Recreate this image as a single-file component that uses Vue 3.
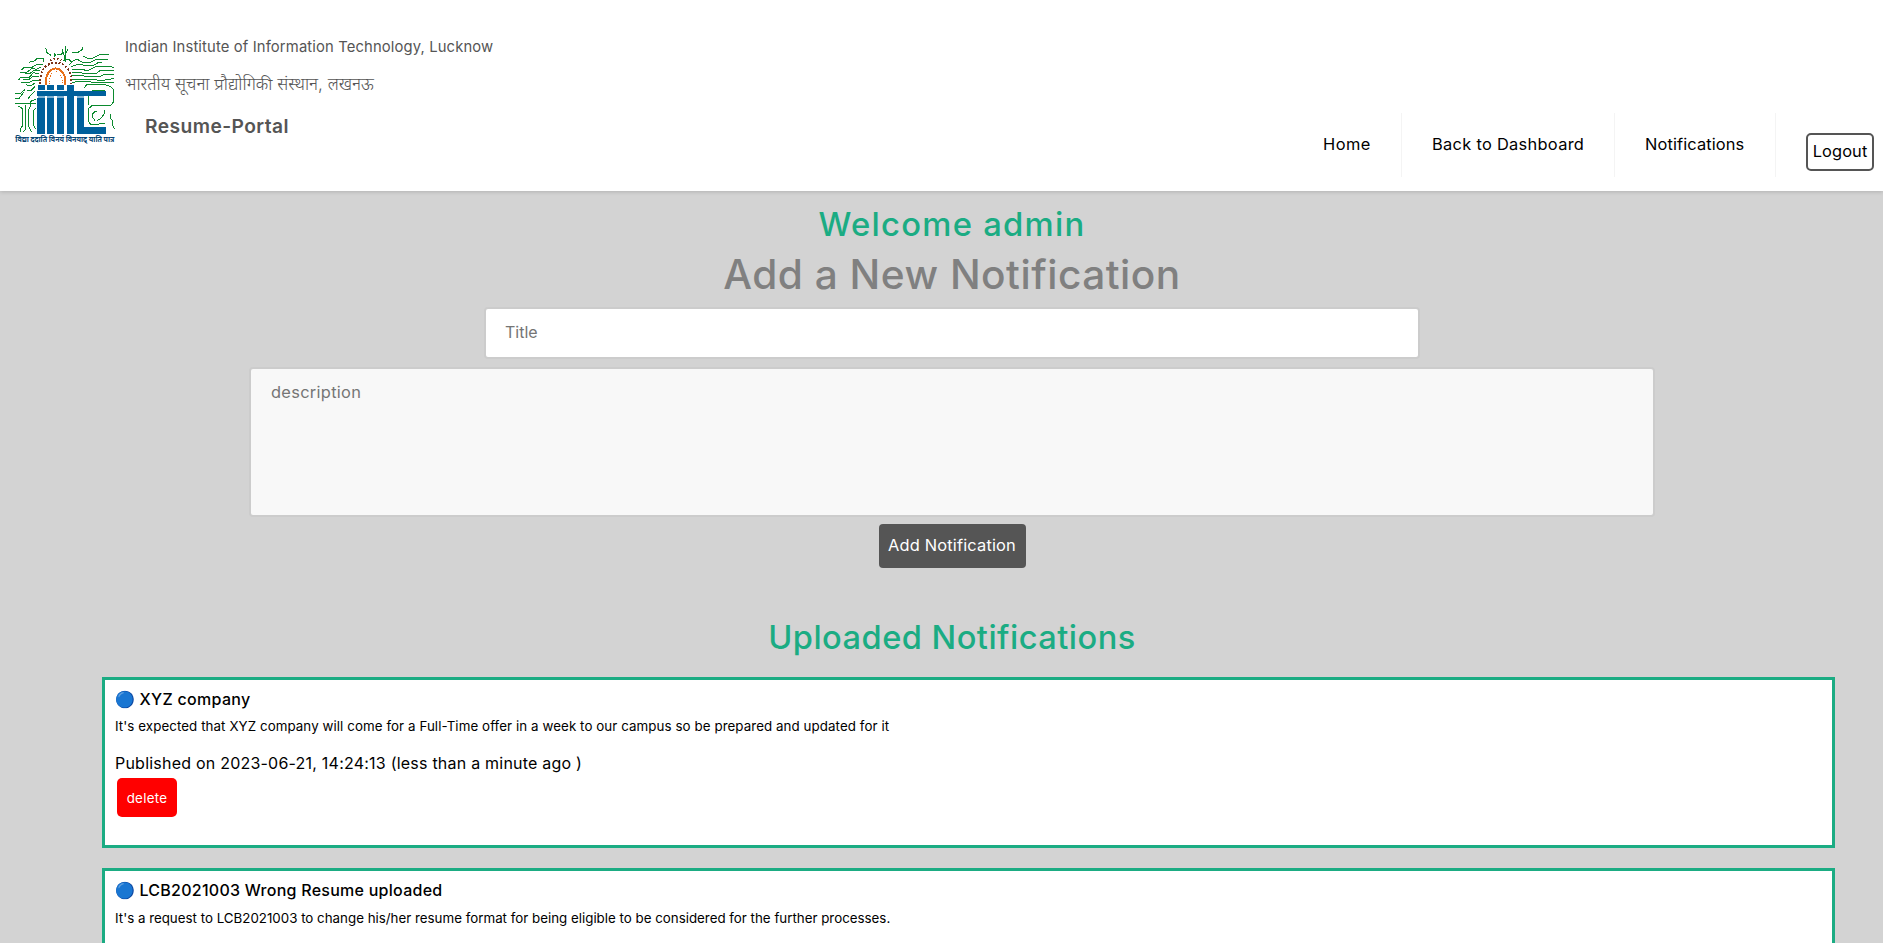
<script setup>
import { ref } from 'vue'

const title = ref('')
const description = ref('')

const links = [
  { label: 'Home', cls: 'home' },
  { label: 'Back to Dashboard', cls: 'back' },
  { label: 'Notifications', cls: 'notes' },
]

const notifications = [
  {
    title: 'XYZ company',
    text: "It's expected that XYZ company will come for a Full-Time offer in a week to our campus so be prepared and updated for it",
    published: 'Published on 2023-06-21, 14:24:13 (less than a minute ago )',
    cls: 'first',
  },
  {
    title: 'LCB2021003 Wrong Resume uploaded',
    text: "It's a request to LCB2021003 to change his/her resume format for being eligible to be considered for the further processes.",
    cls: 'second',
  },
]
</script>

<template>
  <div class="page">
    <header class="header">
      <div class="brand">
        <svg class="logo" viewBox="45 45 300 300" shape-rendering="crispEdges">
          <g fill="none" stroke="#0b8a2e" stroke-width="3">
            <path d="M217 69 L226 66 H236 L246 59 L249 51 M188 58 V68 L193 76 V92 M197 48 V96 M203 58 L199 70 M190 92 L206 88 L214 96" />
            <path d="M163 82 V70 L168 76 M172 74 H182 L190 66" />
            <path d="M250 79 L262 84 H280 L296 75 L310 72 H326 M208 103 L222 91 L232 88 L246 96 H272 L288 88 H325" />
            <path d="M212 110 L234 103 L258 106 H280 L294 98 H306 M215 118 H245 L262 122 L290 109 H325 L343 112" />
            <path d="M217 127 H232 L262 131 H288 L300 122 H343 M217 138 L240 136 L262 140 H300 L312 133 H343" />
            <path d="M217 148 H270 L290 150 H316 L343 145 M217 158 L236 154 H262 L284 158 H343" />
            <path d="M252 175 L260 165 H316 L330 170 L341 180 V216 L333 226 H322 M316 228 H276 L264 238 V272 L272 284 H290 L316 280" transform="translate(0 -1)" />
            <path d="M322 227 H312 M264 224 V206 L268 190 L280 181 H316 M285 272 L278 262 V252 L286 244 H292 M292 272 L304 264 L312 252 V240 M330 252 V262 L337 272 V285 L343 296" />
            <path d="M137 54 L141 68 L153 76 M129 96 V84 H112 L104 92 L88 97 M128 104 H110 L96 112 H73 L65 120" />
            <path d="M122 112 L108 118 L98 114 L82 126 H60 M120 122 H100 L88 132 L72 128 M118 132 L100 128 L88 142 H62 L56 150" />
            <path d="M116 140 H98 L84 150 L68 148 M116 150 H100 L88 158 H62 M106 158 L92 168 L78 164" />
            <path d="M104 170 L92 182 L82 181 M76 178 L60 191 H46 M72 186 L58 204 H46 M104 184 L92 196 L84 206" />
            <path d="M46 219 H108 M54 228 L68 236 V286 L62 296 V306 M78 226 L76 240 V298 L70 306 M108 208 L92 214 V228 L86 238 V290 L94 306 M108 234 L100 242 V284 L106 296" />
          </g>
          <g fill="none" stroke="#7c3418" stroke-width="6">
            <path d="M121 163 V150 C121 112 148 98 167 98 C186 98 213 112 213 150 V163" stroke-dasharray="6 5" />
            <path d="M150 91 L166 85 L184 91" stroke-dasharray="5 6" />
          </g>
          <path d="M138 164 V148 C140 128 156 115 167 115 C178 115 194 128 196 148 V164" fill="none" stroke="#e8701a" stroke-width="6" />
          <path d="M148 163 V148 C150 134 160 125 167 125 C174 125 184 134 186 148 V163" fill="none" stroke="#e8701a" stroke-width="3" stroke-dasharray="3 5" />
          <g fill="#00609c">
            <path d="M114 165 h20 v15 h-20z M141 165 h21 v15 h-21z M171 165 h21 v15 h-21z M201 165 h21 v146 h-21z" />
            <path d="M111 183 h207 v16 h-207z M111 204 h24 v107 h-24z M141 204 h21 v107 h-21z M171 204 h21 v107 h-21z M231 204 h21 v87 h66 v20 h-87z" />
          </g>
          <path d="M114 199 h21 v4 h-21z M141 199 h21 v4 h-21z M171 199 h21 v4 h-21z M231 199 h21 v4 h-21z" fill="#7fb0d0" />
          <text class="motto" x="46" y="335" textLength="297" lengthAdjust="spacingAndGlyphs">विद्या ददाति विनयं विनयाद् याति पात्र</text>
        </svg>
        <div class="names">
          <div class="english">Indian Institute of Information Technology, Lucknow</div>
          <div class="hindi">भारतीय सूचना प्रौद्योगिकी संस्थान, लखनऊ</div>
          <div class="portal">Resume-Portal</div>
        </div>
      </div>
      <nav class="nav">
        <a v-for="link in links" :key="link.label" class="link" :class="link.cls">{{ link.label }}</a>
        <button class="logout">Logout</button>
      </nav>
    </header>

    <main class="main">
      <form class="form" @submit.prevent>
        <h2 class="welcome">Welcome admin</h2>
        <h1 class="heading">Add a New Notification</h1>
        <input v-model="title" class="title-input" placeholder="Title" />
        <textarea v-model="description" class="desc-input" placeholder="description"></textarea>
        <button class="add">Add Notification</button>
        <h2 class="uploaded">Uploaded Notifications</h2>
      </form>
      <section class="list">
        <article v-for="n in notifications" :key="n.title" class="card" :class="n.cls">
          <h4 class="card-title"><span class="dot">🔵</span><span class="card-name">{{ n.title }}</span></h4>
          <p class="card-text">{{ n.text }}</p>
          <template v-if="n.published">
            <p class="card-date">{{ n.published }}</p>
            <button class="delete">delete</button>
          </template>
        </article>
      </section>
    </main>
  </div>
</template>

<style>
body {
  margin: 0;
  overflow: hidden;
}
</style>

<style scoped>
.page {
  height: 943px;
  overflow: hidden;
  background: #d3d3d3;
  font-family: Inter, "Noto Sans", sans-serif;
  font-size: 16px;
  line-height: 24px;
  color: #000;
}
.page * {
  box-sizing: border-box;
}
h1, h2, h4, p {
  margin: 0;
  font-weight: 500;
  white-space: nowrap;
}
button, input, textarea {
  font-family: inherit;
  font-size: 16px;
  line-height: 24px;
}
.header {
  position: relative;
  display: flex;
  justify-content: space-between;
  height: 191px;
  background: #fff;
  box-shadow: 0 1px 4px rgba(0, 0, 0, 0.16);
}
.brand {
  display: flex;
  gap: 10px;
  padding: 45px 0 0 15px;
}
.logo {
  width: 100px;
  height: 100px;
  overflow: visible;
}
.motto {
  font-size: 22px;
  font-weight: 700;
  fill: #0a4673;
}
.names {
  margin-top: -10px;
  color: #555;
  white-space: nowrap;
}
.english {
  font-size: 14.8px;
  letter-spacing: 0.13px;
}
.hindi {
  height: 24px;
  margin-top: 13px;
  font-size: 17.2px;
  font-weight: 300;
}
.portal {
  margin: 16px 0 0 20px;
  font-size: 19.2px;
  font-weight: 600;
  line-height: 28px;
  letter-spacing: 0.44px;
}
.nav {
  display: flex;
  height: 64px;
  margin: 113px 9px 0 0;
}
.link {
  padding-left: 30px;
  border-right: 1px solid #f4f4f4;
  font-size: 16.4px;
  line-height: 62px;
  white-space: nowrap;
}
.home {
  width: 109px;
  letter-spacing: 0.5px;
}
.back {
  width: 213px;
  letter-spacing: 0.3px;
}
.notes {
  width: 161px;
  letter-spacing: 0.12px;
}
.logout {
  width: 68px;
  height: 38px;
  margin: 20px 0 0 30px;
  padding: 0 0 2px;
  border: 2px solid #555;
  border-radius: 5px;
  background: #fff;
  color: #000;
  font-size: 16.4px;
  letter-spacing: 0.12px;
}
.form {
  display: flex;
  flex-direction: column;
  align-items: center;
  padding-left: 21px;
}
.welcome {
  margin-top: 9px;
  color: #1bac83;
  font-size: 32.8px;
  line-height: 48px;
  letter-spacing: 1.25px;
}
.heading {
  margin-top: -1px;
  color: gray;
  font-size: 40.6px;
  line-height: 56px;
  letter-spacing: 0.5px;
}
.title-input {
  width: 936px;
  height: 52px;
  margin: 4px 0 8px;
  padding: 0 19px 2px;
  border: 2px solid #ccc;
  border-radius: 4px;
  background: #fff;
  outline: none;
}
.desc-input {
  width: 1406px;
  height: 150px;
  padding: 11px 20px;
  border: 2px solid #ccc;
  border-radius: 4px;
  background: #f8f8f8;
  font-size: 16.4px;
  letter-spacing: 0.3px;
  resize: none;
  outline: none;
}
.title-input::placeholder,
.desc-input::placeholder {
  color: #757575;
}
.add {
  width: 147px;
  height: 44px;
  margin-top: 7px;
  padding: 0 0 3px;
  border: 0;
  border-radius: 4px;
  background: #555;
  color: #fff;
  font-size: 16.4px;
  letter-spacing: 0.18px;
}
.uploaded {
  margin-top: 45px;
  color: #1bac83;
  font-size: 32.6px;
  line-height: 48px;
  letter-spacing: 0.48px;
}
.list {
  display: flex;
  flex-direction: column;
  gap: 20px;
  width: 1733px;
  margin: 16px 0 0 102px;
}
.card {
  height: 171px;
  flex: none;
  padding: 7px 10px;
  border: 3px solid #1bac83;
  background: #fff;
}
.card-title {
  display: flex;
}
.dot {
  width: 24.5px;
}
.card-text {
  margin-top: 3px;
  font-size: 13.33px;
  font-weight: 400;
}
.card-date {
  margin-top: 13px;
  font-weight: 400;
  letter-spacing: 0.22px;
}
.first .card-name {
  letter-spacing: 0.3px;
}
.second .card-name {
  letter-spacing: 0.26px;
}
.first .card-text {
  letter-spacing: 0.075px;
}
.second .card-text {
  margin-top: 4px;
}
.delete {
  display: block;
  width: 60px;
  height: 39px;
  margin: 3px 0 0 2px;
  padding: 0;
  border: 0;
  border-radius: 5px;
  background: #f00;
  color: #fff;
  font-size: 13.33px;
  letter-spacing: 0.3px;
}
</style>
